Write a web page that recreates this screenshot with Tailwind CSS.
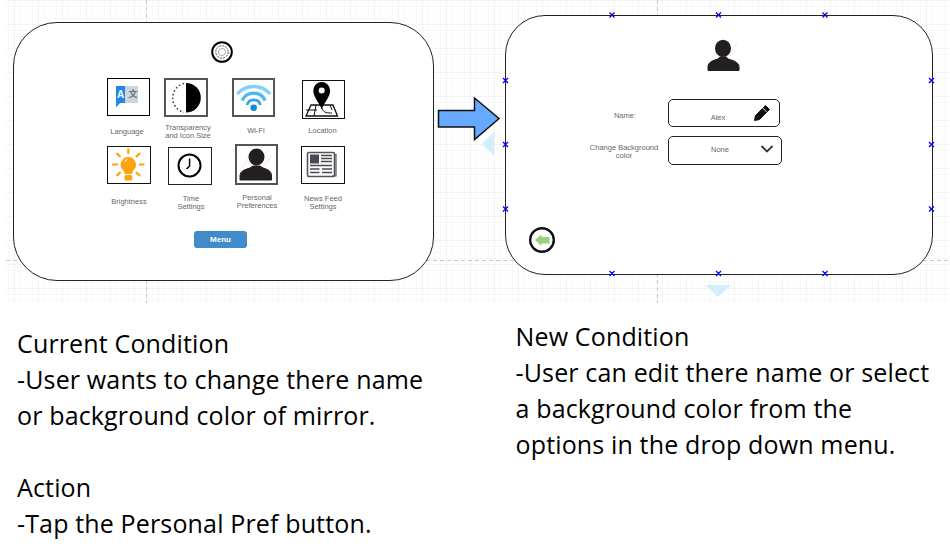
<!DOCTYPE html>
<html>
<head>
<meta charset="utf-8">
<script src="https://cdn.jsdelivr.net/npm/@tailwindcss/browser@4"></script>
</head>
<body class="bg-white">
<div class="w-[950px] h-[553px] overflow-hidden bg-white font-['Open_Sans','Noto_Sans',sans-serif] text-black">
  <div class="relative h-[305px] w-full font-['Liberation_Sans',sans-serif] text-[7.5px] leading-[8px] text-[#676767]">
    <!-- grid paper -->
    <svg class="absolute inset-0" width="950" height="305" xmlns="http://www.w3.org/2000/svg">
      <defs>
        <pattern id="minor" x="14" y="0" width="6" height="6" patternUnits="userSpaceOnUse"><path d="M6 0H0V6" fill="none" stroke="#f6f6f6" stroke-width="1"/></pattern>
        <pattern id="major" x="14" y="0" width="24" height="24" patternUnits="userSpaceOnUse"><path d="M24 0H0V24" fill="none" stroke="#ebebeb" stroke-width="1"/></pattern>
      </defs>
      <rect x="6" width="944" height="303" fill="url(#minor)"/>
      <rect x="6" width="944" height="303" fill="url(#major)"/>
      <path d="M146.5 0V303M657.5 0V303M6 260.5H950" stroke="#c9c9c9" stroke-dasharray="4 3" fill="none"/>
      <path d="M494 132L482 144L494 156Z" fill="#d5eef9"/>
      <path d="M705 285H731L718 297Z" fill="#d5eef9"/>
    </svg>

    <!-- left screen -->
    <div class="absolute left-[13px] top-[22px] w-[421px] h-[259px] rounded-[44px] border-[1.5px] border-[#222] bg-white"></div>
    <!-- right screen -->
    <div class="absolute left-[505px] top-[15px] w-[428px] h-[259.5px] rounded-[40px] border-[1.5px] border-[#222] bg-white"></div>

    <!-- icon boxes -->
    <div class="absolute left-[107px] top-[78px] w-[43px] h-[38px] border-[1.5px] border-black"></div>
    <div class="absolute left-[164px] top-[78px] w-[44px] h-[39px] border-2 border-[#555]"></div>
    <div class="absolute left-[232px] top-[78px] w-[43px] h-[39px] border-2 border-[#555]"></div>
    <div class="absolute left-[302px] top-[80px] w-[43px] h-[39px] border-[1.5px] border-[#111]"></div>
    <div class="absolute left-[107px] top-[146px] w-[44px] h-[38px] border-[1.5px] border-[#111]"></div>
    <div class="absolute left-[168px] top-[147px] w-[44px] h-[38px] border-[1.5px] border-[#222]"></div>
    <div class="absolute left-[235px] top-[144px] w-[43px] h-[41px] border-2 border-[#555]"></div>
    <div class="absolute left-[301px] top-[146px] w-[44px] h-[38px] border-[1.5px] border-[#111]"></div>

    <!-- field boxes -->
    <div class="absolute left-[668px] top-[99px] w-[112px] h-[28px] rounded-[5px] border-[1.5px] border-[#222]"></div>
    <div class="absolute left-[668px] top-[136px] w-[114px] h-[29px] rounded-[5px] border-[1.5px] border-[#222]"></div>

    <!-- menu button -->
    <div class="absolute left-[194px] top-[231px] w-[53px] h-[17px] rounded-[3px] bg-[#428bca] flex items-center justify-center text-white font-bold text-[8px]">Menu</div>

    <!-- drawn icons and arrows -->
    <svg class="absolute inset-0" width="950" height="305" xmlns="http://www.w3.org/2000/svg">
      <!-- flow arrow -->
      <path d="M438.5 110.5H474.5V98L499 118.5L474.5 139.5V127H438.5Z" fill="#66aaff" stroke="#111" stroke-width="1.5"/>

      <!-- settings gear -->
      <circle cx="222" cy="52" r="9.8" fill="#fff" stroke="#000" stroke-width="2"/>
      <circle cx="222" cy="52" r="6.2" fill="none" stroke="#555" stroke-width="1" stroke-dasharray="2.2 1"/>
      <circle cx="222" cy="52" r="3.6" fill="none" stroke="#888" stroke-width=".7"/>

      <!-- language -->
      <path d="M116 86H125V103H120L116 107.5Z" fill="#1e88ee"/>
      <rect x="125" y="86" width="13" height="17" fill="#ccd6dc"/>

      <!-- transparency -->
      <path d="M186 83A14.8 14.8 0 0 1 186 112.6Z" fill="#000"/>
      <path d="M184 83.5A14.8 14.8 0 0 0 184 112.3" fill="none" stroke="#333" stroke-width="1.5" stroke-dasharray="1.5 2.4"/>

      <!-- wifi -->
      <path d="M237.2 94A21.9 21.9 0 0 1 270.2 94" fill="none" stroke="#7fd0fa" stroke-width="3.4"/>
      <path d="M242.2 100.5A12.7 12.7 0 0 1 265.2 100.5" fill="none" stroke="#4db8f0" stroke-width="3.2"/>
      <path d="M247 105A7 7 0 0 1 260.5 105" fill="none" stroke="#2ba3e6" stroke-width="2.6"/>
      <circle cx="253.7" cy="107.8" r="3.2" fill="#0a8ad8"/>

      <!-- location -->
      <path d="M311 105H333L337.5 116H306Z" fill="#fff" stroke="#111" stroke-width="1.3"/>
      <path d="M316 105L314 116M322 108C323 113 328 113 332 113M306 110H317M330 105L332 110" fill="none" stroke="#111" stroke-width="1"/>
      <path d="M321.7 109.5C319 102 313.3 97 313.3 90.5A8.4 8.4 0 0 1 330.1 90.5C330.1 97 324.4 102 321.7 109.5Z" fill="#000"/>
      <circle cx="321.7" cy="90.5" r="3" fill="#fff"/>

      <!-- brightness -->
      <g stroke="#ffa30a" stroke-width="2.2" fill="none">
        <path d="M128.3 148.5V154M112 164.5H118M139 164.5H144.5M116.5 153L120.5 157M140 153L136 157M116.5 176L120.5 172M140 176L136 172"/>
      </g>
      <path d="M128.3 157A7.6 7.6 0 0 0 123 170C124.2 171.2 124.5 172.5 124.5 174H132.2C132.2 172.5 132.5 171.2 133.7 170A7.6 7.6 0 0 0 128.3 157Z" fill="#ffa30a"/>
      <rect x="124.5" y="175" width="7.8" height="5.5" rx="1.5" fill="#ffa30a"/>
      <path d="M125 161.5A4 4 0 0 1 127.5 159.5" stroke="#fff" stroke-width="1.2" fill="none"/>

      <!-- clock -->
      <circle cx="189.5" cy="165.5" r="11" fill="none" stroke="#000" stroke-width="2"/>
      <path d="M189.6 158.5V166L186.5 169" fill="none" stroke="#000" stroke-width="1.5"/>

      <!-- personal preferences -->
      <path d="M240 172L254 149M245 178L268 150M252 180L272 156" stroke="#f4f4f4" stroke-width="2"/>
      <ellipse cx="256.5" cy="157" rx="8" ry="8.5" fill="#231f20"/>
      <path d="M240 180V176C240 171 245 169.5 250 168L253 166H260L263 168C268 169.5 271.5 171 271.5 176V180Z" fill="#231f20" stroke="#231f20" stroke-linejoin="round"/>

      <!-- news feed -->
      <rect x="307.5" y="152.5" width="27" height="24" rx="1.5" fill="#fff" stroke="#555" stroke-width="1.6"/>
      <path d="M334.5 154.5H336V176H332" fill="none" stroke="#555" stroke-width="1.2"/>
      <rect x="310" y="154.5" width="9" height="9" fill="#4a4a55"/>
      <path d="M321 155.5H332M321 158.5H332M321 161.5H332M310 165.5H332M310 169H319.5M322 169H332M310 172.5H319.5M322 172.5H332" stroke="#4a4a55" stroke-width="1.3"/>

      <!-- profile avatar -->
      <path d="M708 66L722 40M716 71L738 42" stroke="#f7f7f7" stroke-width="1.5"/>
      <ellipse cx="723" cy="48.3" rx="8" ry="8.6" fill="#231f20"/>
      <path d="M708 70.5V67C708 62 713 60.5 718 59L720 57H726L728 59C733 60.5 739 62 739 67V70.5Z" fill="#231f20" stroke="#231f20" stroke-linejoin="round"/>

      <!-- pencil -->
      <path d="M754.5 120.5L755.5 115.5L765.5 105.5L769.5 109.5L759.5 119.5Z" fill="#111" stroke="#111" stroke-linejoin="round"/>
      <path d="M762.5 107.8L767 112.3" stroke="#fff" stroke-width=".9"/>

      <!-- chevron -->
      <path d="M761.5 146L767 151.5L772.5 146" fill="none" stroke="#333" stroke-width="1.8"/>

      <!-- back button -->
      <circle cx="542" cy="240" r="11.8" fill="#fff" stroke="#111" stroke-width="2.4"/>
      <path d="M535 240L541.5 234.5V237H549.5V243.5H541.5V246Z" fill="#9ccf7c"/>

      <!-- connection points -->
      <g stroke="#0000ff" stroke-width="1.3" fill="none">
        <path d="M609.5 12.5L614.5 17.5M614.5 12.5L609.5 17.5M716 12.5L721 17.5M721 12.5L716 17.5M822.5 12.5L827.5 17.5M827.5 12.5L822.5 17.5"/>
        <path d="M609.5 271L614.5 276M614.5 271L609.5 276M716 271L721 276M721 271L716 276M822.5 271L827.5 276M827.5 271L822.5 276"/>
        <path d="M503 78L508 83M508 78L503 83M503 142L508 147M508 142L503 147M503 206.5L508 211.5M508 206.5L503 211.5"/>
        <path d="M929 78L934 83M934 78L929 83M929 142L934 147M934 142L929 147M929 206.5L934 211.5M934 206.5L929 211.5"/>
      </g>
    </svg>

    <!-- glyphs inside the language icon -->
    <span class="absolute left-[117px] top-[90px] font-bold text-[10px] leading-[10px] text-white">A</span>
    <span class="absolute left-[128.5px] top-[89px] font-['Noto_Sans_CJK_SC',sans-serif] font-bold text-[9px] leading-[10px] text-[#66757f]">文</span>

    <!-- labels -->
    <div class="absolute left-[127px] top-[128px] -translate-x-1/2 whitespace-nowrap text-center">Language</div>
    <div class="absolute left-[188px] top-[124px] -translate-x-1/2 whitespace-nowrap text-center">Transparency<br>and Icon Size</div>
    <div class="absolute left-[256px] top-[127px] -translate-x-1/2 whitespace-nowrap text-center">Wi-Fi</div>
    <div class="absolute left-[322.5px] top-[127px] -translate-x-1/2 whitespace-nowrap text-center">Location</div>
    <div class="absolute left-[129px] top-[198px] -translate-x-1/2 whitespace-nowrap text-center">Brightness</div>
    <div class="absolute left-[191px] top-[194.5px] -translate-x-1/2 whitespace-nowrap text-center">Time<br>Settings</div>
    <div class="absolute left-[257px] top-[194px] -translate-x-1/2 whitespace-nowrap text-center">Personal<br>Preferences</div>
    <div class="absolute left-[323px] top-[194.5px] -translate-x-1/2 whitespace-nowrap text-center">News Feed<br>Settings</div>
    <div class="absolute left-[625px] top-[111.5px] -translate-x-1/2 whitespace-nowrap text-center">Name:</div>
    <div class="absolute left-[624px] top-[144px] -translate-x-1/2 whitespace-nowrap text-center">Change Background<br>color</div>
    <div class="absolute left-[718px] top-[114px] -translate-x-1/2 whitespace-nowrap text-center">Alex</div>
    <div class="absolute left-[720px] top-[146px] -translate-x-1/2 whitespace-nowrap text-center">None</div>
  </div>

  <!-- captions -->
  <div class="flex text-[25px] leading-[36px] tracking-[0.15px]">
    <div class="w-[515.5px] shrink-0 pl-[17px] pt-[20px]">
      <p>Current Condition</p>
      <p>-User wants to change there name</p>
      <p>or background color of mirror.</p>
      <p class="mt-[36px]">Action</p>
      <p>-Tap the Personal Pref button.</p>
    </div>
    <div class="flex-1 pt-[13px]">
      <p>New Condition</p>
      <p>-User can edit there name or select</p>
      <p>a background color from the</p>
      <p>options in the drop down menu.</p>
    </div>
  </div>
</div>
</body>
</html>
